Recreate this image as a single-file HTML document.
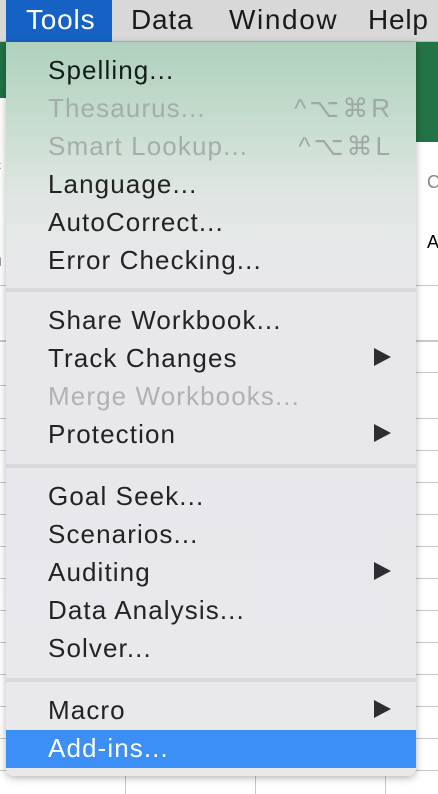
<!DOCTYPE html>
<html><head><meta charset="utf-8"><style>
*{margin:0;padding:0;box-sizing:border-box}
body{width:438px;height:794px;overflow:hidden;position:relative;background:#fff;font-family:"Liberation Sans",sans-serif;
background-image:repeating-linear-gradient(to bottom,transparent 0,transparent 9px,#c8c8c8 9px,#c8c8c8 10px,transparent 10px,transparent 32px);background-position:0 441px;}
.bar{position:absolute;left:0;top:0;width:438px;height:42px;background:#d9d8d9;border-bottom:1px solid #b8b8b8}
.bar span{position:absolute;top:4px;font-size:28px;color:#1a1a1a;letter-spacing:0.8px}
.tools{position:absolute;left:6px;top:0;width:106px;height:42px;background:#1662c4}
.gL{position:absolute;left:0;top:42px;width:8px;height:56px;background:#217346}
.gR{position:absolute;left:410px;top:42px;width:28px;height:100px;background:#237346}
.wtop{position:absolute;left:0;top:0;width:438px;height:441px;background:#fff}
.line{position:absolute;height:1px;background:#c8c8c8}
.vl{position:absolute;width:1px;background:#c8c8c8;top:776px;height:18px}
.menu{position:absolute;left:6px;top:42px;width:410px;height:734px;border-radius:0 0 8px 8px;
background:linear-gradient(to bottom,#b0d0be 0px,#c3dbcc 70px,#dfe6e2 150px,#e8e8eb 230px,#e9e9ec 734px);
box-shadow:0 2px 8px rgba(0,0,0,.3);overflow:hidden}
.it{position:absolute;left:42px;font-size:26px;letter-spacing:1.1px;color:#232323;line-height:30px;white-space:nowrap}
.dis{color:#a4aea8}
.dis2{color:#b1b1b3}
.sc{position:absolute;right:26px;font-size:26px;color:#9fa9a3;line-height:30px;letter-spacing:3px;margin-right:-3px}
.arr{position:absolute;left:368px;width:0;height:0;border-top:9px solid transparent;border-bottom:9px solid transparent;border-left:17px solid #2e2e32}
.sep{position:absolute;left:0;width:410px;height:4px;background:#d8d8db}
.hl{position:absolute;left:0;top:688px;width:410px;height:38px;background:#3b8ff6}
.side{position:absolute;font-size:18px;color:#333}
</style></head><body>
<div class="wtop"></div>
<div class="gL"></div><div class="gR"></div>
<div class="line" style="left:416px;top:285px;width:22px"></div>
<div class="line" style="left:416px;top:340px;width:22px;height:2px"></div>
<div class="line" style="left:416px;top:372px;width:22px"></div>
<div class="line" style="left:416px;top:418px;width:22px"></div>
<div class="line" style="left:0;top:285px;width:6px"></div>
<div class="line" style="left:0;top:340px;width:6px;height:2px"></div>
<div class="line" style="left:0;top:385px;width:6px"></div>
<div class="line" style="left:0;top:418px;width:6px"></div>
<div class="side" style="left:-6px;top:104px;color:#217346">t</div>
<div class="side" style="left:-8px;top:155px;color:#000">c</div>
<div class="side" style="left:-6px;top:202px;color:#888">t</div>
<div class="side" style="left:-8px;top:250px;color:#888">n</div>
<div class="side" style="left:427px;top:172px;color:#888">C</div>
<div class="side" style="left:427px;top:232px;color:#000">A</div>
<div class="vl" style="left:125px"></div><div class="vl" style="left:255px"></div><div class="vl" style="left:385px"></div>
<div class="bar"><div class="tools"></div>
<span style="left:26px;color:#fff">Tools</span>
<span style="left:131px">Data</span>
<span style="left:229px;letter-spacing:1.6px">Window</span>
<span style="left:368px">Help</span></div>
<div class="menu">
<div class="it" style="top:13px;color:#111d16">Spelling...</div>
<div class="it dis" style="top:51px">Thesaurus...</div><div class="sc" style="top:51px">^⌥⌘R</div>
<div class="it dis" style="top:89px">Smart Lookup...</div><div class="sc" style="top:89px">^⌥⌘L</div>
<div class="it" style="top:127px">Language...</div>
<div class="it" style="top:165px">AutoCorrect...</div>
<div class="it" style="top:203px">Error Checking...</div>
<div class="sep" style="top:246px"></div>
<div class="it" style="top:263px">Share Workbook...</div>
<div class="it" style="top:301px">Track Changes</div><div class="arr" style="top:306px"></div>
<div class="it dis2" style="top:339px">Merge Workbooks...</div>
<div class="it" style="top:377px">Protection</div><div class="arr" style="top:382px"></div>
<div class="sep" style="top:422px"></div>
<div class="it" style="top:439px">Goal Seek...</div>
<div class="it" style="top:477px">Scenarios...</div>
<div class="it" style="top:515px">Auditing</div><div class="arr" style="top:520px"></div>
<div class="it" style="top:553px">Data Analysis...</div>
<div class="it" style="top:591px">Solver...</div>
<div class="sep" style="top:636px"></div>
<div class="it" style="top:653px">Macro</div><div class="arr" style="top:658px"></div>
<div class="hl"></div>
<div class="it" style="top:691px;color:#fff">Add-ins...</div>
</div>
</body></html>
